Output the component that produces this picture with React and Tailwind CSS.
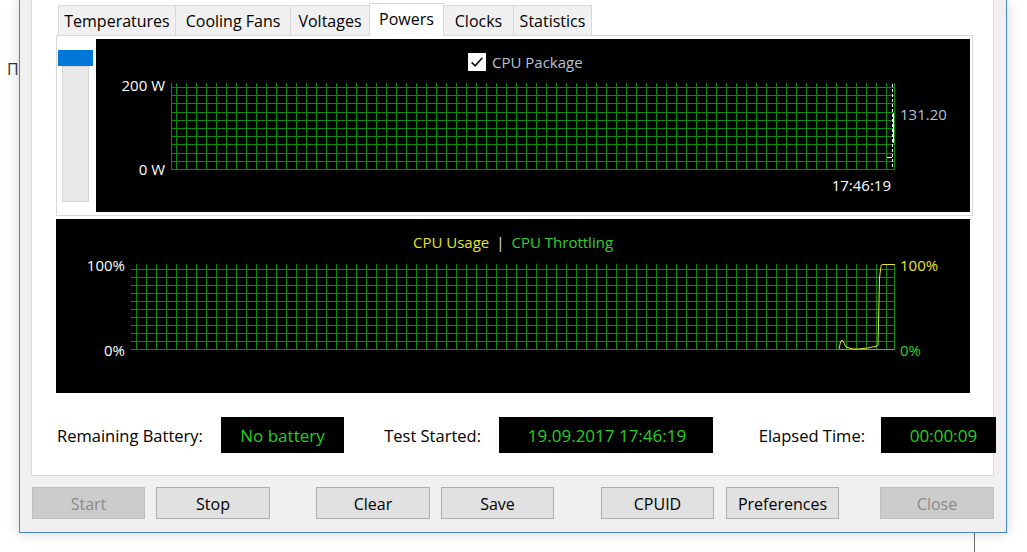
import React from 'react'

const GREEN_GRID = '#0b8a0b'

const TABS = [
  { label: 'Temperatures', cls: 'w-[118px] border-l border-r' },
  { label: 'Cooling Fans', cls: 'w-[115px] border-r' },
  { label: 'Voltages', cls: 'w-[78px]' },
  { label: 'Powers', cls: 'w-[75px] border-l border-r', active: true },
  { label: 'Clocks', cls: 'w-[70px] border-r' },
  { label: 'Statistics', cls: 'w-[78px] border-r' },
]

const BUTTONS = [
  { label: 'Start', cls: 'ml-[12px] w-[113px]', disabled: true },
  { label: 'Stop', cls: 'ml-[11px] w-[114px]' },
  { label: 'Clear', cls: 'ml-[46px] w-[114px]' },
  { label: 'Save', cls: 'ml-[11px] w-[113px]' },
  { label: 'CPUID', cls: 'ml-[47px] w-[113px]' },
  { label: 'Preferences', cls: 'ml-[12px] w-[113px]' },
  { label: 'Close', cls: 'ml-[41px] w-[114px]', disabled: true },
]

// grid of 1px lines drawn as rects so they stay crisp
function GridLines({ w, h, rows, cols }) {
  return (
    <g fill={GREEN_GRID} shapeRendering="crispEdges">
      {rows.map((y, i) => <rect key={'r' + i} x="0" y={y} width={w} height="1" />)}
      {cols.map((x, i) => <rect key={'c' + i} x={x} y="0" width="1" height={h} />)}
    </g>
  )
}

function PowerGrid() {
  const w = 724, h = 87
  const rows = Array.from({ length: 11 }, (_, k) => Math.round(86 - 8.2 * k))
  const cols = [0, ...Array.from({ length: 72 }, (_, k) => 5 + 10 * k), 723]
  return (
    <svg width={w} height={h} className="block shrink-0">
      <GridLines w={w} h={h} rows={rows} cols={cols} />
      <line x1="721.5" x2="721.5" y1="1" y2="86" stroke="#fff" strokeDasharray="3 2" shapeRendering="crispEdges" />
      <rect x="722" y="30" width="1" height="30" fill="#fff" />
      <rect x="716" y="74" width="5" height="1" fill="#fff" />
    </svg>
  )
}

function UsageGrid() {
  const w = 764, h = 86
  const rows = Array.from({ length: 11 }, (_, k) => 5 + 8 * k)
  const cols = [...Array.from({ length: 76 }, (_, k) => 5 + 10 * k), 763]
  return (
    <svg width={w} height={h} className="block shrink-0">
      <GridLines w={w} h={h} rows={rows} cols={cols} />
      <rect x="708" y="85" width="56" height="1" fill="#2ed02e" />
      <polyline
        points="708,85 709.5,78 711,76 713,79 715,83 718,84 722,85 727,85 732,84.5 737,84 741,83 745,82.5 747,81 747.7,50 748.5,14 750,2 751,0.5 764,0.5"
        fill="none" stroke="#e6e62a" />
    </svg>
  )
}

function PowerChart() {
  return (
    <div className="w-[874px] h-[173px] bg-black flex flex-col shrink-0">
      <div className="h-[44px] pl-[372px] pt-[13px]">
        <div className="flex items-center h-[20px]">
          <div className="w-[18px] h-[18px] bg-white flex items-center justify-center">
            <svg width="14" height="14" viewBox="0 0 13 13">
              <path d="M1.5 6.8 L4.8 10 L11.5 2.5" fill="none" stroke="#111" strokeWidth="1.5" />
            </svg>
          </div>
          <span className="ml-[6px] text-[15px] leading-[20px] text-[#b0c4de]">CPU Package</span>
        </div>
      </div>
      <div className="flex h-[87px]">
        <div className="w-[75px] shrink-0 -mt-[8px] -mb-[9px] pr-[6px] flex flex-col justify-between items-end text-[15px] leading-[20px] text-white">
          <span>200 W</span>
          <span>0 W</span>
        </div>
        <PowerGrid />
        <div className="pl-[5px] pt-[21px] text-[15px] leading-[20px] text-[#b0c4de]">131.20</div>
      </div>
      <div className="mt-[5px] w-[795px] text-right text-[15px] leading-[20px] text-white">17:46:19</div>
    </div>
  )
}

function UsageChart() {
  return (
    <div className="mt-[3px] w-[914px] h-[174px] bg-black flex flex-col">
      <div className="h-[45px] pt-[13px] text-center text-[15px] leading-[20px]">
        <span className="text-[#e6e62a]">CPU Usage</span>
        <span className="text-[#e0e0e0] mx-[7px]">|</span>
        <span className="text-[#2ed02e]">CPU Throttling</span>
      </div>
      <div className="flex h-[86px]">
        <div className="w-[75px] shrink-0 -mt-[9px] -mb-[10px] pr-[6px] flex flex-col justify-between items-end text-[15px] leading-[20px] text-white">
          <span>100%</span>
          <span>0%</span>
        </div>
        <UsageGrid />
        <div className="pl-[5px] -mt-[9px] -mb-[10px] flex flex-col justify-between text-[15px] leading-[20px]">
          <span className="text-[#e6e62a]">100%</span>
          <span className="text-[#2ed02e]">0%</span>
        </div>
      </div>
    </div>
  )
}

function InfoRow() {
  return (
    <div className="mt-[24px] h-[36px] flex items-center text-[16.5px] text-black">
      <div className="w-[165px] shrink-0 pl-px pt-[3px]">Remaining Battery:</div>
      <div className="w-[123px] shrink-0 h-[36px] pt-[2px] bg-black text-[#22d022] text-[17px] flex items-center justify-center">No battery</div>
      <div className="w-[137px] shrink-0 mr-[18px] text-right pt-[3px]">Test Started:</div>
      <div className="w-[214px] shrink-0 h-[36px] pt-[2px] bg-black text-[#22d022] text-[17px] flex items-center justify-center pl-[2px]">19.09.2017 17:46:19</div>
      <div className="w-[152px] shrink-0 mr-[16px] text-right pt-[3px]">Elapsed Time:</div>
      <div className="w-[115px] shrink-0 h-[36px] pt-[2px] bg-black text-[#22d022] text-[17px] flex items-center justify-center pl-[10px]">00:00:09</div>
    </div>
  )
}

export default function App() {
  return (
    <div className="relative w-[1027px] h-[552px] bg-white overflow-hidden font-['Open_Sans',sans-serif]">
      {/* bits of the window behind */}
      <span className="absolute left-[7px] top-[57px] text-[16px] text-[#333]">П</span>
      <div className="absolute left-[974px] top-[533px] w-px h-[19px] bg-[#6d6d6d]" />

      <div className="relative ml-[19px] w-[988px] h-[533px] bg-[#f0f0f0] border-x border-b border-[#4a86c8] shadow-[0_0_12px_rgba(0,0,0,0.18)]">
        <div className="ml-[11px] w-[963px] h-[476px] bg-white border-x border-b border-[#dadada] pl-[24px]">
          {/* tab strip */}
          <div className="h-[35px] flex items-end pl-[2px]">
            {TABS.map(t => (
              <div key={t.label}
                className={`${t.cls} border-t border-[#d9d9d9] flex items-center justify-center text-[16px] text-black ${t.active ? 'h-[33px] -mb-px bg-white relative z-10 pb-[2px]' : 'h-[30px] bg-[#f0f0f0]'}`}>
                {t.label}
              </div>
            ))}
          </div>
          {/* tab page */}
          <div className="w-[917px] h-[181px] border border-[#d9d9d9] pt-[3px] flex">
            <div className="ml-px w-[35px] mt-[11px] flex flex-col">
              <div className="h-[16px] bg-[#0078d7]" />
              <div className="mx-[4px] h-[136px] bg-[#e8e8e8] border border-[#d4d4d4]" />
            </div>
            <div className="ml-[3px]">
              <PowerChart />
            </div>
          </div>
          <UsageChart />
          <InfoRow />
        </div>

        <div className="mt-[11px] flex">
          {BUTTONS.map(b => (
            <button key={b.label}
              className={`${b.cls} h-[32px] border text-[16px] flex items-center justify-center pt-px ${b.disabled ? 'bg-[#cccccc] border-[#bfbfbf] text-[#8a8a8a]' : 'bg-[#e1e1e1] border-[#adadad] text-black'}`}>
              {b.label}
            </button>
          ))}
        </div>
      </div>
    </div>
  )
}
